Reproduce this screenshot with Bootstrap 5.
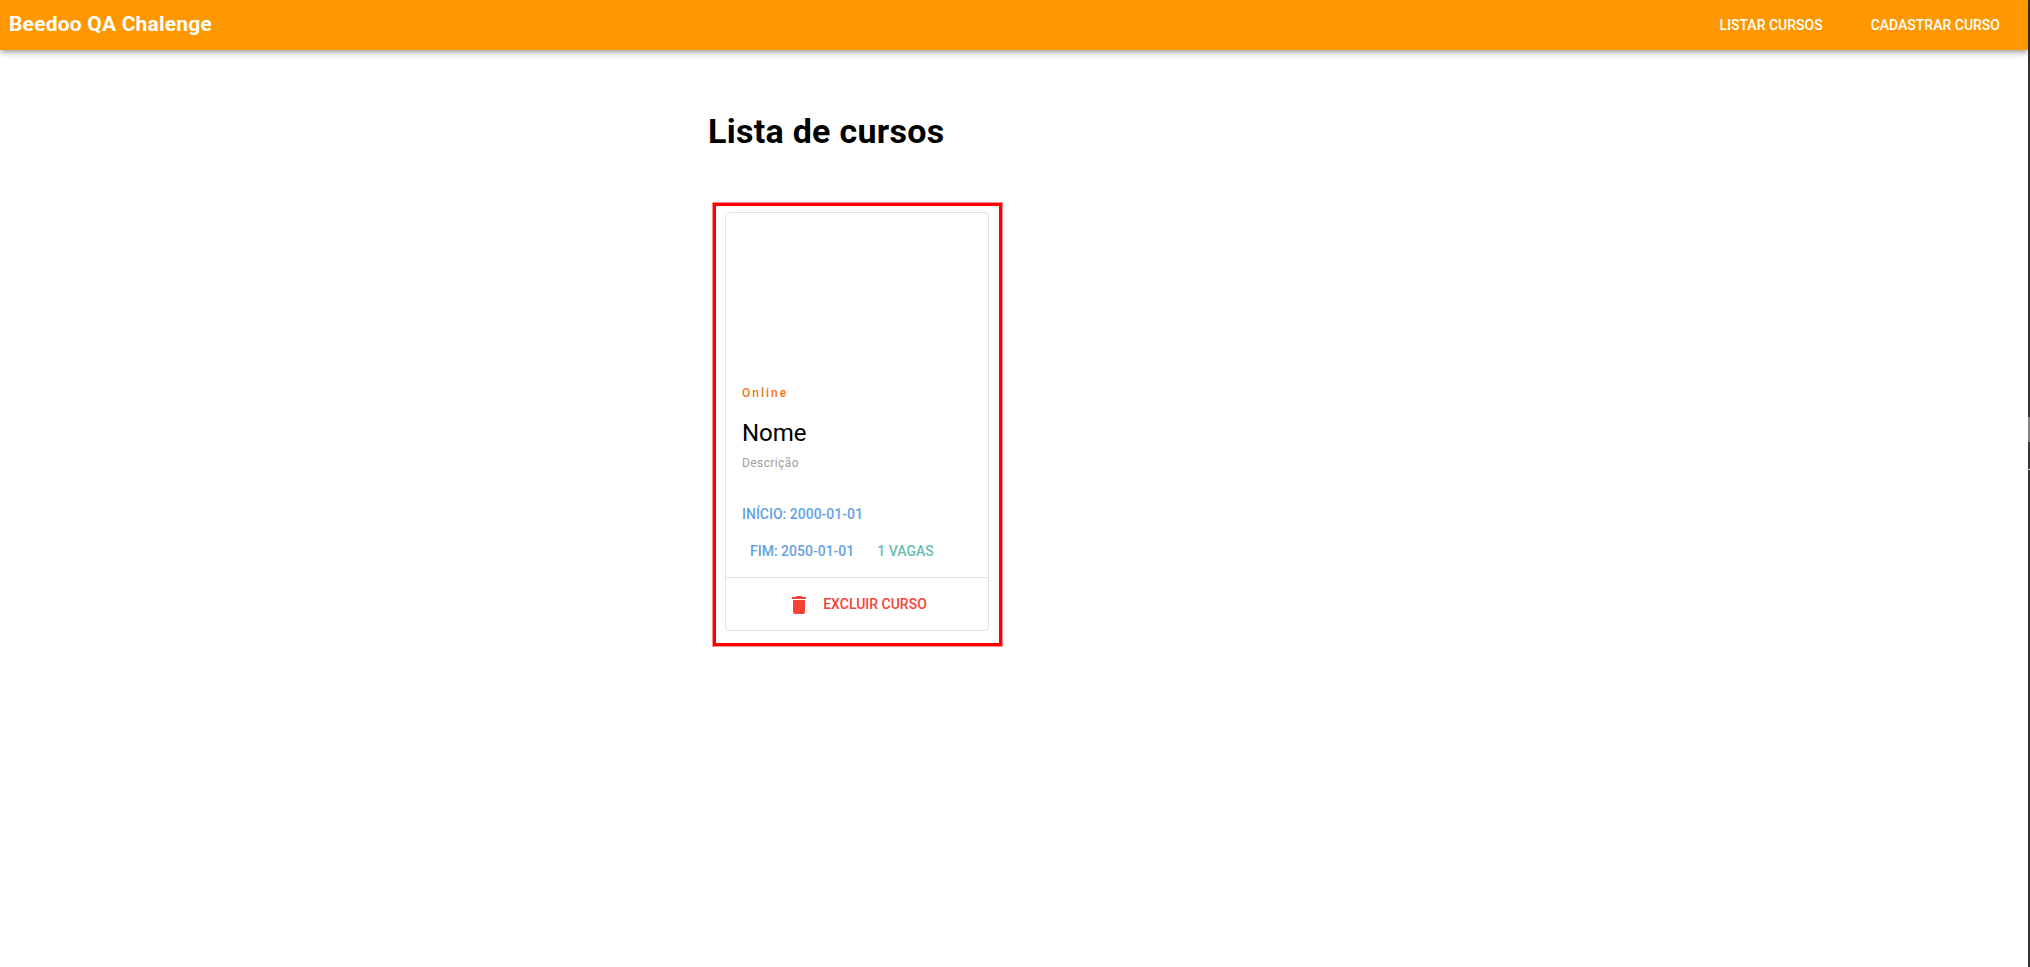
<!DOCTYPE html>
<html lang="pt-BR">
<head>
  <meta charset="UTF-8" />
  <meta name="viewport" content="width=device-width, initial-scale=1.0"/>
  <title>Beedoo QA Chalenge</title>
  <link href="https://cdn.jsdelivr.net/npm/bootstrap@5.3.0/dist/css/bootstrap.min.css" rel="stylesheet"/>
  <style>
    html, body { height: 100%; }
    body {
      font-family: Roboto, "Liberation Sans", sans-serif;
      color: #000;
      background: #fff;
      overflow: hidden;
    }
    .page-shell { height: 967px; }
    /* dark sliver of the window edge on the right */
    .edge-strip {
      width: 2px;
      flex: none;
      background: linear-gradient(to bottom, #2f3437 0, #2f3437 417px, #7c8285 417px, #7c8285 442px, #2f3437 442px, #2f3437 469px, #e4e6e7 469px, #e4e6e7 470px, #2f3437 470px);
    }
    .top-bar {
      height: 50px;
      padding: 0;
      background: #ff9800;
      box-shadow: 0 2px 4px -1px rgba(0,0,0,.2), 0 4px 5px 0 rgba(0,0,0,.14), 0 1px 10px 0 rgba(0,0,0,.12);
    }
    .top-bar .navbar-brand {
      margin: 0 0 0 9px;
      padding: 0;
      font-size: 21px;
      font-weight: 700;
      letter-spacing: .2px;
      color: #fff;
    }
    .top-link {
      display: block;
      padding: 0 16px;
      margin-left: 16px;
      font-size: 14px;
      font-weight: 500;
      line-height: 48px;
      color: #fff;
      text-decoration: none;
      text-transform: uppercase;
    }
    .top-links { padding-right: 12px; }
    .content-col { width: 612px; margin: 0 auto; padding-top: 56px; }
    .page-title { font-size: 34px; font-weight: 700; letter-spacing: .28px; line-height: 50px; margin: 0 0 47px; }
    .mark-box {
      width: 289px;
      height: 443px;
      margin-left: 5px;
      border: 3px solid #ff0000;
      box-shadow: 0 0 0 1px rgba(255,0,0,.45);
      padding: 6px 9px;
    }
    .course-card {
      width: 264px;
      height: 419px;
      border: 1px solid #e0e0e0;
      border-radius: 4px;
      background: #fff;
    }
    .card-media { height: 172px; }
    .course-type {
      font-size: 12px;
      font-weight: 500;
      letter-spacing: 2px;
      line-height: 16px;
      color: #f57514;
      margin: 0;
    }
    .course-name { font-size: 24px; font-weight: 400; line-height: 32px; margin: 16px 0 0; }
    .course-desc { font-size: 12px; letter-spacing: .4px; line-height: 18px; color: #9e9e9e; margin: 5px 0 0; }
    .course-info {
      font-size: 14px;
      font-weight: 500;
      line-height: 36px;
      text-transform: uppercase;
    }
    .info-blue { color: #64a2e3; }
    .info-teal { color: #66bfb0; }
    .start-row { margin: 0 0 0 16px; }
    .end-row { padding: 1px 0 0 24px; margin-bottom: 8px; gap: 23px; }
    .card-body-area { padding: 0 16px; }
    .card-foot {
      height: 53px;
      border-top: 1px solid #e0e0e0;
      padding-top: 1px;
      color: #f44336;
      font-size: 14px;
      font-weight: 500;
      text-transform: uppercase;
      gap: 12px;
    }
    .card-foot svg { width: 24px; height: 24px; fill: #f44336; }
  </style>
</head>
<body>
  <div class="page-shell d-flex">
    <div class="flex-grow-1">
      <nav class="navbar top-bar justify-content-between flex-nowrap">
        <a class="navbar-brand" href="#">Beedoo QA Chalenge</a>
        <div class="top-links d-flex">
          <a class="top-link" href="#">Listar cursos</a>
          <a class="top-link" href="#">Cadastrar curso</a>
        </div>
      </nav>

      <div class="content-col">
        <h1 class="page-title">Lista de cursos</h1>
        <div class="mark-box">
          <div class="course-card d-flex flex-column">
            <div class="card-media"></div>
            <div class="card-body-area flex-grow-1">
              <p class="course-type">Online</p>
              <h2 class="course-name">Nome</h2>
              <p class="course-desc">Descrição</p>
            </div>
            <div class="course-info info-blue start-row">Início: 2000-01-01</div>
            <div class="course-info end-row d-flex">
              <span class="info-blue">Fim: 2050-01-01</span>
              <span class="info-teal">1 vagas</span>
            </div>
            <div class="card-foot d-flex align-items-center justify-content-center">
              <svg viewBox="0 0 24 24"><path d="M19,4H15.5L14.5,3H9.5L8.5,4H5V6H19M6,19A2,2 0 0,0 8,21H16A2,2 0 0,0 18,19V7H6V19Z"/></svg>
              <span>Excluir curso</span>
            </div>
          </div>
        </div>
      </div>
    </div>
    <div class="edge-strip"></div>
  </div>
  <script src="https://cdn.jsdelivr.net/npm/bootstrap@5.3.0/dist/js/bootstrap.bundle.min.js"></script>
</body>
</html>
